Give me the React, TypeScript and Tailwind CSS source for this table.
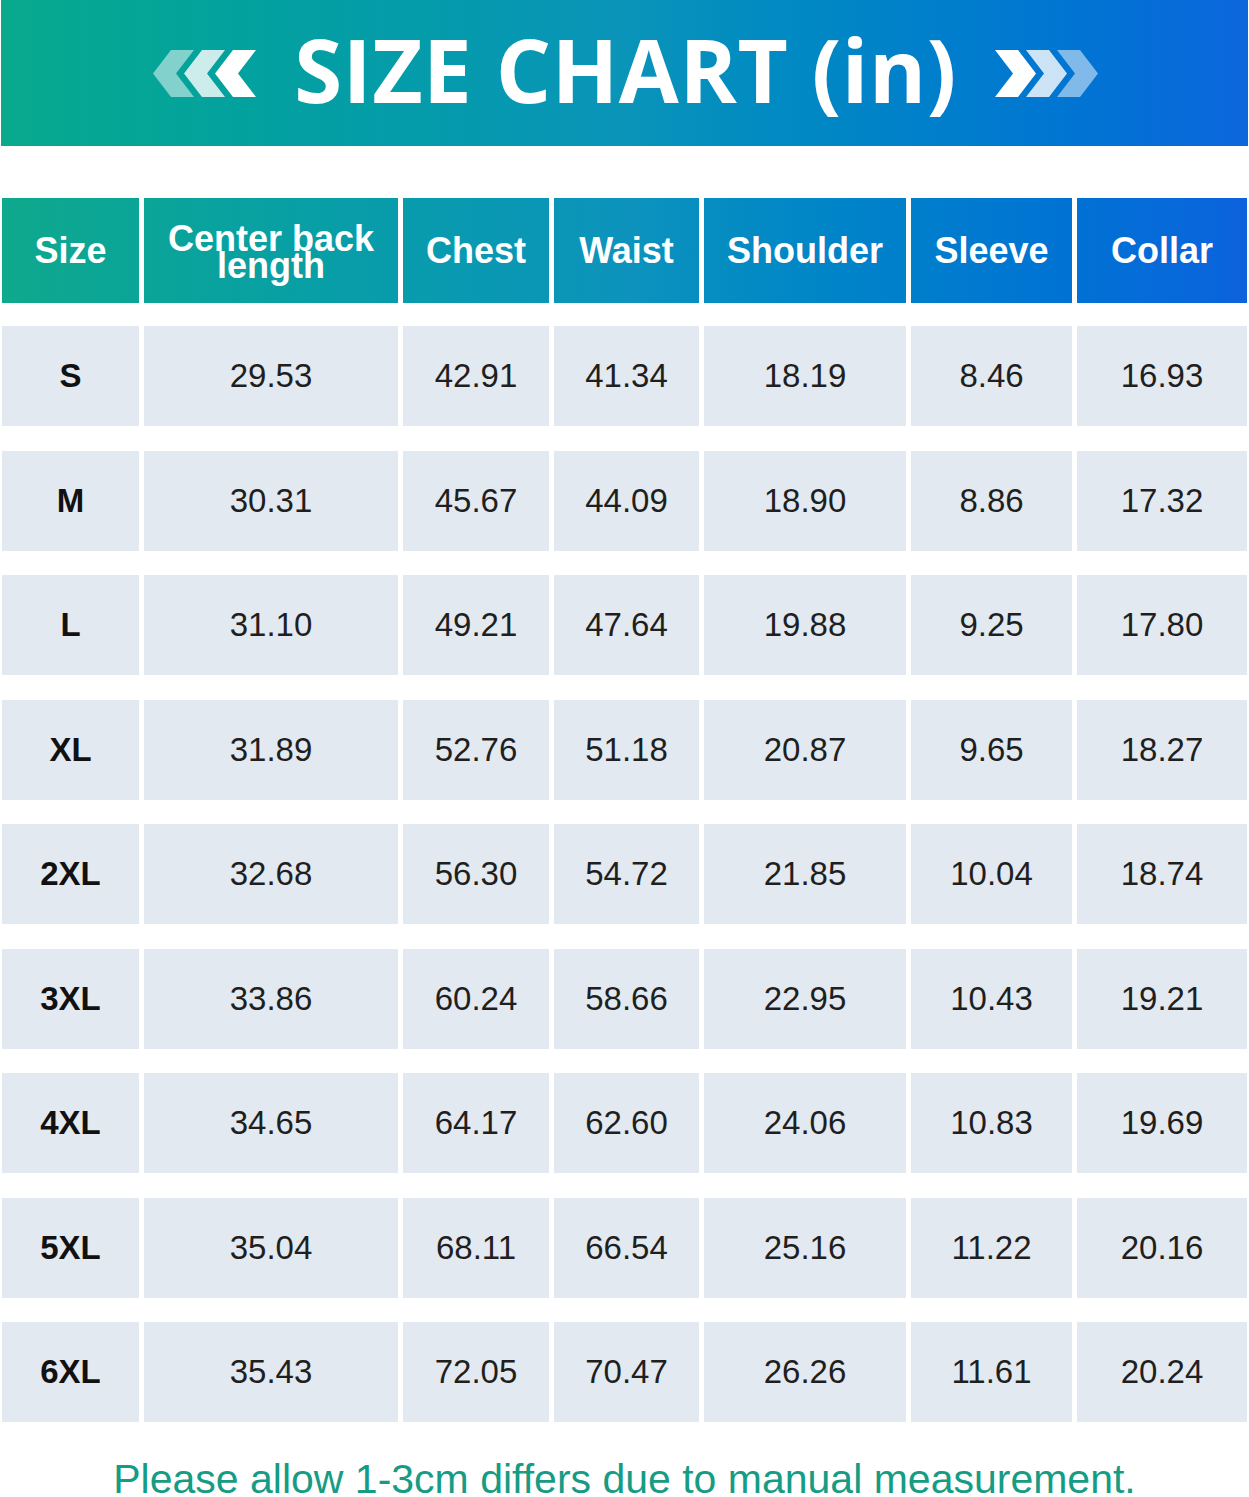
import React from "react";

interface SizeRow {
  size: string;
  values: string[];
}

const headers = ["Size", "Center back length", "Chest", "Waist", "Shoulder", "Sleeve", "Collar"];

const rows: SizeRow[] = [
  { size: "S", values: ["29.53", "42.91", "41.34", "18.19", "8.46", "16.93"] },
  { size: "M", values: ["30.31", "45.67", "44.09", "18.90", "8.86", "17.32"] },
  { size: "L", values: ["31.10", "49.21", "47.64", "19.88", "9.25", "17.80"] },
  { size: "XL", values: ["31.89", "52.76", "51.18", "20.87", "9.65", "18.27"] },
  { size: "2XL", values: ["32.68", "56.30", "54.72", "21.85", "10.04", "18.74"] },
  { size: "3XL", values: ["33.86", "60.24", "58.66", "22.95", "10.43", "19.21"] },
  { size: "4XL", values: ["34.65", "64.17", "62.60", "24.06", "10.83", "19.69"] },
  { size: "5XL", values: ["35.04", "68.11", "66.54", "25.16", "11.22", "20.16"] },
  { size: "6XL", values: ["35.43", "72.05", "70.47", "26.26", "11.61", "20.24"] },
];

const gridCols = "grid grid-cols-[137px_254px_146px_145px_202px_161px_1fr] gap-x-[5px] px-[2px]";

// three chevrons, the outer ones faded
const Chevrons: React.FC<{ dir: "left" | "right" }> = ({ dir }) => {
  const left = "0,23.5 18,0 41,0 23,23.5 41,47 18,47";
  const right = "41,23.5 23,0 0,0 18,23.5 0,47 23,47";
  const opac = dir === "left" ? [0.5, 0.8, 1] : [1, 0.8, 0.5];
  return (
    <svg width="103" height="47" viewBox="0 0 103 47" className="shrink-0">
      {[0, 31, 62].map((x, i) => (
        <polygon
          key={x}
          points={dir === "left" ? left : right}
          transform={`translate(${x} 0)`}
          fill="#ffffff"
          fillOpacity={opac[i]}
        />
      ))}
    </svg>
  );
};

const App: React.FC = () => {
  return (
    <div className="w-[1249px] h-[1497px] bg-white overflow-hidden font-['Liberation_Sans',Arial,sans-serif]">
      <div className="mx-px h-[146px] bg-gradient-to-r from-[#08a98c] via-[#0a94b9] to-[#0c66dc] flex items-center justify-center gap-[38px] pl-[2px]">
        <Chevrons dir="left" />
        <h1 className="text-white font-bold text-[87px] leading-none font-['Open_Sans',sans-serif] tracking-[0.6px] -mt-[8px]">
          SIZE CHART (in)
        </h1>
        <Chevrons dir="right" />
      </div>

      <div className={`${gridCols} mt-[52px] h-[105px]`}>
        {headers.map((h) => (
          <div
            key={h}
            className="bg-fixed bg-gradient-to-r from-[#0fa98d] via-[#0d93bc] to-[#0c62dd] flex items-center justify-center text-center text-white font-bold text-[36px] leading-[27px] px-2"
          >
            {h === "Center back length" ? (
              <span className="pt-[3px]">
                Center back
                <br />
                length
              </span>
            ) : (
              h
            )}
          </div>
        ))}
      </div>

      <div className="mt-[23px] flex flex-col gap-y-[24.5px]">
        {rows.map((r) => (
          <div key={r.size} className={`${gridCols} h-[100px]`}>
            <div className="bg-[#e3e9f0] flex items-center justify-center text-[33px] font-bold text-[#111]">
              {r.size}
            </div>
            {r.values.map((v, i) => (
              <div
                key={i}
                className="bg-[#e3e9f0] flex items-center justify-center text-[33px] text-[#1f1f1f]"
              >
                {v}
              </div>
            ))}
          </div>
        ))}
      </div>

      <p className="mt-[37px] text-center text-[41px] leading-[40px] text-[#169c84]">
        Please allow 1-3cm differs due to manual measurement.
      </p>
    </div>
  );
};

export default App;
